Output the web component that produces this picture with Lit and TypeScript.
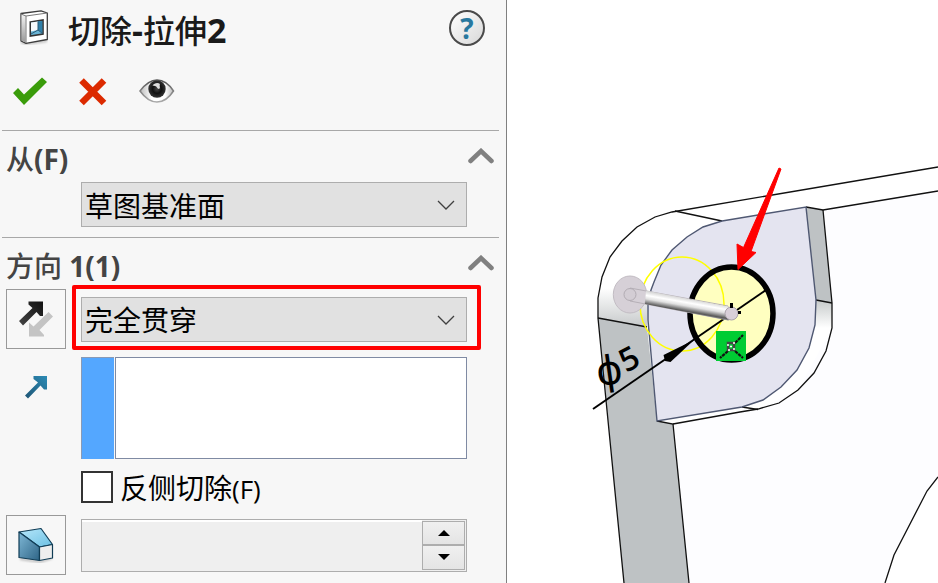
import { LitElement, html, css, svg } from "lit";
import { customElement } from "lit/decorators.js";

const chevronUp = html`<svg width="26" height="18" viewBox="0 0 26 18" aria-hidden="true">
  <path d="M2.500 13 L13 3 L23.500 13" fill="none" stroke="#808080" stroke-width="4.500" stroke-linecap="round" stroke-linejoin="miter"/>
</svg>`;

const chevronDown = html`<svg class="caret" width="18" height="10" viewBox="0 0 18 10" aria-hidden="true">
  <path d="M1 1 L9 9 L17 1" fill="none" stroke="#404040" stroke-width="1.3"/>
</svg>`;

@customElement("model-view")
export class ModelView extends LitElement {
  static styles = css`
    :host { display: block; position: relative; overflow: hidden; background: #fff; }
    .scene { position: absolute; inset: 0; width: 100%; height: 100%; display: block; }
    .dim { font-family: "Open Sans", "Liberation Sans", sans-serif; font-size: 32px; font-weight: 600; }
    .phi { font-family: "DejaVu Sans", sans-serif; font-size: 40px; }
  `;

  render() {
    const face = "M722 221 L806 207 L816 300 L815 325 L809 348 L797 370 L781 387 L763 400 L742 407 L657 421 L648 320 L648 303 L651 290 L654 282 L661 265 L672 250 L687 237 L703 227 Z";
    const outerRight = "M823 210 L832 303 L832 328 L826 351 L814 373 L798 390 L779 403 L758 409 L740 412 L673 424";
    return html`<svg class="scene" viewBox="507 0 431 583" preserveAspectRatio="xMinYMin slice" role="img" aria-label="Φ5">
      <defs>
        <linearGradient id="leftFillet" x1="0" y1="0" x2="0" y2="1">
          <stop offset="0" stop-color="#fff"/><stop offset="1" stop-color="#c6c9ca"/>
        </linearGradient>
        <linearGradient id="rightFillet" x1="0" y1="0" x2="0" y2="1">
          <stop offset="0" stop-color="#c6caca"/><stop offset="1" stop-color="#fff"/>
        </linearGradient>
        <linearGradient id="tube" gradientUnits="userSpaceOnUse" x1="690" y1="297" x2="687" y2="314">
          <stop offset="0" stop-color="#c4c4c4"/><stop offset=".35" stop-color="#fff"/><stop offset=".55" stop-color="#e0e0e0"/><stop offset=".85" stop-color="#585858"/><stop offset="1" stop-color="#b8b8b8"/>
        </linearGradient>
      </defs>
      ${svg`
      <path d="M823 210 L938 191 V583 H689 L673 424 L758 409 L798 390 L832 328 V303 Z" fill="#fdfdff"/>
      <path d="M938 477 L927 491 L894 555 L885 583 H938 Z" fill="#fff"/>
      <path d="M598 318 L647 327 L657 421 L673 424 L689 583 H624 Z" fill="#bec2c4"/>
      <path d="M599 288 L651 290 L648 303 L647 327 L598 318 Z" fill="url(#leftFillet)"/>
      <path d="M806 207 L823 210 L832 303 L816 300 Z" fill="#bec2c4"/>
      <path d="M816 300 L832 303 V328 H815 Z" fill="url(#rightFillet)"/>
      <path d=${face} fill="#e4e4f0"/>
      <g fill="none" stroke="#111" stroke-width="1.3">
        <path d="M938 167 L672 212 L655 217 L637 227 L622 241 L610 257 L602 277 L598 298 V318 L605 390 L624 583"/>
        <path d="M675 211 L722 221 M598 318 L647 327 M806 207 L823 210 L938 191 M816 300 L832 303"/>
        <path d=${outerRight}/>
        <path d="M657 421 L673 424 L689 583 M742 407 L758 409.500"/>
        <path d="M938 477 L927 491 L894 555 L885 583"/>
      </g>
      <path d=${face} fill="none" stroke="#4f5872" stroke-width="1.4"/>
      <ellipse cx="731.5" cy="313.500" rx="41.500" ry="46.500" fill="#ffffc0"/>
      <ellipse cx="682" cy="304" rx="42" ry="47" fill="none" stroke="#ff0" stroke-width="1.500"/>
      <ellipse cx="731.5" cy="313.500" rx="41.500" ry="46.500" fill="none" stroke="#000" stroke-width="5.500"/>
      <path d="M593 409 L766 290" stroke="#000" stroke-width="2"/>
      <path d="M694 340 L663.500 355 L665 361 L670.500 362 Z"/>
      <text class="phi" transform="translate(598 386) rotate(-8)">ϕ</text>
      <text class="dim" transform="translate(626 373) rotate(-27)">5</text>
      <ellipse cx="630" cy="294.500" rx="16.700" ry="18.500" fill="#d6d0d7" stroke="#c2bcc3"/>
      <path d="M630 288 L728 306 V320 L630 301 Z" fill="none" stroke="#b6b0b7"/>
      <path d="M646 290.500 L730 307 L729 320.500 L645 304 Z" fill="url(#tube)"/>
      <circle cx="630" cy="294.500" r="6" fill="#d3cdd4" stroke="#b2acb3"/>
      <circle cx="731.5" cy="313.500" r="6.500" fill="#d8cfd8" stroke="#aba3ab"/>
      <path d="M730 303 h3 v5 h-3 z M738 311 h3 v3 h-3 z"/>
      <rect x="716" y="331" width="30" height="30" fill="#0c3"/>
      <path d="M735 343 L743 335 M735 351 L743 358 M728 351 L720 358" stroke="#111" stroke-width="2.200" stroke-dasharray="3.500 .8"/>
      <path d="M728 343 H734 V350 H728 Z" fill="#0c3" stroke="#444" stroke-width="2.500"/>
      <path d="M727 345 h2 M733 343 h2 M733 349 h2 M728 350 h2 M730 346.500 h2" stroke="#fff" stroke-width="1.500"/>
      <path d="M779 168 L781 169 L751 251.500 L756 252.500 L738 269.500 L737 244 L743.500 247.500 Z" fill="#f00" stroke="#f00" stroke-linejoin="round"/>
      `}
    </svg>`;
  }
}

@customElement("app-root")
export class AppRoot extends LitElement {
  static styles = css`
    :host {
      display: grid;
      grid-template-columns: 507px minmax(0, 1fr);
      min-height: 100vh;
      background: #fff;
      color: #000;
      font-family: "Open Sans", "Noto Sans CJK SC", sans-serif;
      font-size: 28px;
      line-height: 40px;
    }
    *, *::before, *::after { box-sizing: border-box; }
    svg { display: block; flex: none; }
    button { appearance: none; border: 0; padding: 0; margin: 0; background: none; font: inherit; color: inherit; }
    .panel { background: #f7f7f7; border-right: 1px solid #808080; }
    .title-row { display: flex; align-items: center; gap: 20px; height: 56px; padding: 0 21px 0 20px; }
    .title { flex: 1; margin: 0; padding-top: 4px; font-size: 32px; font-weight: 500; color: #1a1a1a; }
    .latin { font-weight: 700; }
    .title .latin { font-size: 34px; }
    .help {
      width: 36px; height: 36px; border: 2px solid #4a4a4a; border-radius: 50%;
      background: linear-gradient(135deg, #fff, #d8d8d8);
      color: #28789f; font: 700 28px/32px "Open Sans", sans-serif; text-align: center;
    }
    .actions { display: flex; align-items: center; gap: 32px; height: 72px; padding-left: 13px; }
    .section { padding-bottom: 10px; }
    .section:last-child { padding-bottom: 8px; }
    .section::before { content: ""; display: block; height: 1px; margin: 0 7px 0 2px; background: #a8a8a8; }
    .panel-head { padding-bottom: 2px; }
    .section-head { display: flex; align-items: center; justify-content: space-between; height: 51px; padding: 0 12px 0 6px; }
    .section-title { margin: 0; padding-top: 4px; font-size: 28px; font-weight: 500; color: #444; }
    .fields { display: grid; grid-template-columns: 60px minmax(0, 1fr); column-gap: 15px; row-gap: 12px; align-items: center; padding: 0 39px 0 6px; }
    .second { grid-column: 2; }
    .pick { position: relative; }
    .select {
      display: block; appearance: none; width: 100%; height: 45px; margin: 0; padding: 2px 40px 0 3px;
      border: 1px solid #adadad; border-radius: 0; background: #e1e1e1; color: #000; font: inherit; line-height: 40px;
    }
    .caret { position: absolute; right: 12px; top: 18px; pointer-events: none; }
    .marked::after { content: ""; position: absolute; inset: -12px -14px -8px -9px; border: 4px solid #f00; border-radius: 2px; pointer-events: none; }
    .tile { display: grid; place-items: center; width: 60px; height: 60px; border: 1px solid #999; }
    .plain { display: grid; place-items: center; width: 60px; height: 60px; align-self: start; }
    .group { display: grid; row-gap: 8px; }
    .options { padding-top: 4px; }
    .list { display: flex; gap: 1px; height: 102px; }
    .swatch { width: 33px; background: #54a7ff; border-top: 1px solid #8a9ab5; border-left: 1px solid #8a9ab5; }
    .box { flex: 1; min-width: 0; margin: 0; resize: none; border: 1px solid #7f8aa3; border-radius: 0; background: #fff; font: inherit; }
    .check { display: flex; align-items: center; gap: 7px; height: 32px; }
    .tick { appearance: none; width: 32px; height: 32px; margin: 0; border: 2px solid #333; background: #fff; }
    .check-label { white-space: nowrap; padding-top: 2px; }
    .check-label .small { font-size: 26px; }
    .spin { display: flex; height: 53px; border: 1px solid #adadad; background: #efefef; padding-right: 1px; }
    .value { flex: 1; min-width: 0; border: 0; border-top: 2px solid #fff; padding: 0 4px; background: #efefef; font: inherit; }
    .steps { display: grid; grid-template-rows: 1fr 1fr; width: 43px; padding: 1px 0; }
    .step { display: grid; place-items: center; border: 1px solid #adadad; background: linear-gradient(#f0f0f0, #e4e4e4); }
  `;

  render() {
    return html`
      <aside class="panel">
        <header class="panel-head">
          <div class="title-row">
            <svg width="28" height="36" viewBox="0 0 28 36" aria-hidden="true">
              <defs>
                <linearGradient id="cutSide" x1="0" y1="0" x2="0" y2="1"><stop offset="0" stop-color="#f4f4f4"/><stop offset="1" stop-color="#989898"/></linearGradient>
                <filter id="soft"><feGaussianBlur stdDeviation="1"/></filter>
              </defs>
              <path d="M1 32 L6 34 L27 31" fill="none" stroke="#bbb" stroke-width="2" filter="url(#soft)"/>
              <path d="M1 3.500 L21 0.800 L27.300 3 V29.500 L6 33.300 L1 31 Z" fill="#fff" stroke="#3c3c3c" stroke-width="1.300" stroke-linejoin="round"/>
              <path d="M1.600 4.300 L5.500 6 V32.500 L1.600 30.600 Z" fill="url(#cutSide)"/>
              <path d="M1 4 L6 6 L27.300 3 M6 6 V33" fill="none" stroke="#777"/>
              <path d="M10.300 12 L23 10 V24 L10.300 26 Z" fill="#69b4d5" stroke="#333" stroke-width="1.600"/>
              <path d="M18 11.600 L22.300 11 V23 L18 20 Z" fill="#2f7fa8"/>
              <path d="M11 12.600 L18 11.500 V20 L11 21.500 Z" fill="#f7fafc"/>
              <path d="M18 11.500 V20 L22.500 23.500 M18 20 L11 24" stroke="#2b5b77" fill="none"/>
            </svg>
            <h1 class="title">切除<span class="latin">-</span>拉伸<span class="latin">2</span></h1>
            <button class="help" aria-label="帮助">?</button>
          </div>
          <div class="actions">
            <button aria-label="确定"><svg width="34" height="30" viewBox="0 0 34 30"><path d="M0 16 L5 11 L11 17.500 L29 0.500 L34 5 L11 28 Z" fill="#3a9c0a"/></svg></button>
            <button aria-label="取消"><svg width="28" height="28" viewBox="0 0 28 28"><path d="M2.500 2.500 L25 25 M25 2.500 L2.500 25" stroke="#dc2a00" stroke-width="6.500"/></svg></button>
            <button aria-label="预览"><svg width="36" height="28" viewBox="0 0 36 28">
              <defs>
                <radialGradient id="iris"><stop offset="0" stop-color="#444"/><stop offset=".5" stop-color="#111"/><stop offset="1" stop-color="#333"/></radialGradient>
                <linearGradient id="lid" x1="0" y1="0" x2="0" y2="1"><stop offset="0" stop-color="#555"/><stop offset="1" stop-color="#aaa"/></linearGradient>
                <linearGradient id="white" x1="0" y1="0" x2="1" y2="0"><stop offset="0" stop-color="#bbb"/><stop offset=".35" stop-color="#fff"/><stop offset=".75" stop-color="#fff"/><stop offset="1" stop-color="#bbb"/></linearGradient>
              </defs>
              <path d="M1 13 C7 5 12 2 18 2 C25 2 30 6 34.500 13 C30 20 24 24 18 24 C11 24 6 20 1 13 Z" fill="url(#white)" stroke="url(#lid)" stroke-width="1.500"/>
              <circle cx="18" cy="11" r="8.700" fill="url(#iris)"/>
              <path d="M13.500 7.500 C15 5 19 4 21 6 C20 8 22 10 20 11 C18 11 18 8 16 8 Z" fill="#ddd"/>
            </svg></button>
          </div>
        </header>

        <section class="section">
          <div class="section-head">
            <h2 class="section-title">从<span class="latin">(F)</span></h2>
            <button aria-label="折叠从">${chevronUp}</button>
          </div>
          <div class="fields">
            <div class="pick second">
              <select class="select" aria-label="从"><option>草图基准面</option></select>
              ${chevronDown}
            </div>
          </div>
        </section>

        <section class="section">
          <div class="section-head">
            <h2 class="section-title">方向<span class="latin"> 1(1)</span></h2>
            <button aria-label="折叠方向">${chevronUp}</button>
          </div>
          <div class="group">
            <div class="fields">
              <button class="tile" aria-label="反向">
                <svg width="36" height="38" viewBox="0 0 36 38">
                  <defs><linearGradient id="dark" x1="0" y1="1" x2="1" y2="0"><stop offset="0" stop-color="#444"/><stop offset="1" stop-color="#111"/></linearGradient></defs>
                  <path d="M11 22.500 L15.500 26.500 L30.500 12 L35 16.500 L21.500 30 L26 35 V36.500 H11 Z" fill="#c4c4c4"/>
                  <path d="M1 21 L14.500 8 L10.500 4.500 V1.500 H25 V16 H22 L18.500 12 L5 25.500 Z" fill="url(#dark)"/>
                </svg>
              </button>
              <div class="pick marked">
                <select class="select" aria-label="终止条件"><option>完全贯穿</option></select>
                ${chevronDown}
              </div>
            </div>
            <div class="fields">
              <button class="plain" aria-label="拉伸方向">
                <svg width="24" height="24" viewBox="0 0 24 24">
                  <defs><linearGradient id="blue" x1="0" y1="1" x2="1" y2="0"><stop offset="0" stop-color="#1f5575"/><stop offset="1" stop-color="#2c8bb5"/></linearGradient></defs>
                  <path d="M1 20.500 L14 7.500 L9.500 4 V1 H23 V14.500 H20 L16.500 10.500 L4 23.500 Z" fill="url(#blue)"/>
                </svg>
              </button>
              <div class="list">
                <span class="swatch"></span>
                <textarea class="box" aria-label="拉伸方向"></textarea>
              </div>
            </div>
            <div class="options">
              <div class="fields">
                <label class="check second">
                  <input class="tick" type="checkbox">
                  <span class="check-label">反侧切除<span class="small">(F)</span></span>
                </label>
                <button class="tile" aria-label="拔模开关">
                  <svg width="36" height="36" viewBox="0 0 36 36">
                    <defs>
                      <linearGradient id="draftTop" x1="0" y1="0" x2="1" y2="1"><stop offset="0" stop-color="#b8e8fb"/><stop offset="1" stop-color="#6bbfe2"/></linearGradient>
                      <linearGradient id="draftSide" x1="0" y1="0" x2="1" y2="1"><stop offset="0" stop-color="#7fb8d6"/><stop offset="1" stop-color="#2e6486"/></linearGradient>
                      <filter id="draftSoft"><feGaussianBlur stdDeviation="1.2"/></filter>
                    </defs>
                    <path d="M2 32 L22 35 L34 31" fill="none" stroke="#bbb" stroke-width="2" filter="url(#draftSoft)"/>
                    <g stroke="#103c55" stroke-width="1.200" stroke-linejoin="round">
                      <path d="M1 5 L23 1.500 L34.500 17.500 L21.500 20 Z" fill="url(#draftTop)"/>
                      <path d="M1 5 L21.500 20 V33.500 L1 30.500 Z" fill="url(#draftSide)"/>
                      <path d="M21.500 20 L34.500 17.500 V31 L21.500 33.500 Z" fill="#eee"/>
                    </g>
                  </svg>
                </button>
                <div class="spin">
                  <input class="value" type="text" aria-label="拔模角度" disabled>
                  <div class="steps">
                    <button class="step" aria-label="增加"><svg width="12" height="6" viewBox="0 0 12 6"><path d="M0 6 L6 0 L12 6 Z"/></svg></button>
                    <button class="step" aria-label="减少"><svg width="12" height="6" viewBox="0 0 12 6"><path d="M0 0 L6 6 L12 0 Z"/></svg></button>
                  </div>
                </div>
              </div>
            </div>
          </div>
        </section>
      </aside>
      <model-view></model-view>
    `;
  }
}
